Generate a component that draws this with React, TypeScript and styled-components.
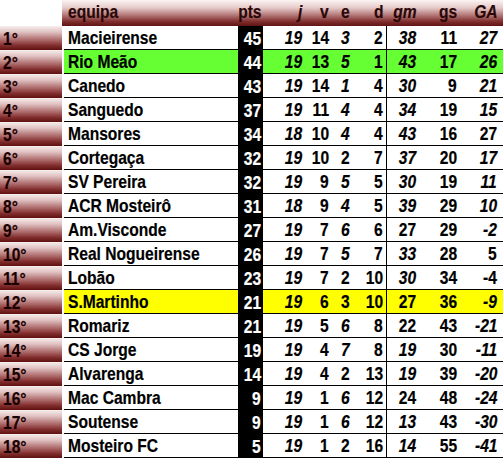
import styled, { createGlobalStyle, css } from "styled-components";

// a leading "_" marks a number printed in italics
const ROWS: [string, string, string, string[]][] = [
  ["1°", "Macieirense", "45", ["_19", "14", "_3", "2", "_38", "11", "_27"]],
  ["2°", "Rio Meão", "44", ["_19", "13", "_5", "1", "_43", "17", "_26"]],
  ["3°", "Canedo", "43", ["_19", "14", "_1", "4", "_30", "9", "_21"]],
  ["4°", "Sanguedo", "37", ["_19", "11", "_4", "4", "_34", "19", "_15"]],
  ["5°", "Mansores", "34", ["_18", "10", "_4", "4", "_43", "16", "27"]],
  ["6°", "Cortegaça", "32", ["_19", "10", "2", "7", "_37", "20", "_17"]],
  ["7°", "SV Pereira", "32", ["_19", "9", "_5", "5", "_30", "19", "_11"]],
  ["8°", "ACR Mosteirô", "31", ["_18", "9", "_4", "5", "_39", "29", "_10"]],
  ["9°", "Am.Visconde", "27", ["_19", "7", "_6", "6", "27", "29", "_-2"]],
  ["10°", "Real Nogueirense", "26", ["_19", "7", "_5", "7", "_33", "28", "5"]],
  ["11°", "Lobão", "23", ["_19", "7", "2", "10", "_30", "34", "-4"]],
  ["12°", "S.Martinho", "21", ["_19", "6", "3", "10", "27", "36", "_-9"]],
  ["13°", "Romariz", "21", ["_19", "5", "_6", "8", "22", "43", "_-21"]],
  ["14°", "CS Jorge", "19", ["_19", "4", "_7", "8", "_19", "30", "_-11"]],
  ["15°", "Alvarenga", "14", ["_19", "4", "2", "13", "_19", "39", "_-20"]],
  ["16°", "Mac Cambra", "9", ["_19", "1", "_6", "12", "24", "48", "_-24"]],
  ["17°", "Soutense", "9", ["_19", "1", "_6", "12", "_13", "43", "_-30"]],
  ["18°", "Mosteiro FC", "5", ["_19", "1", "2", "16", "_14", "55", "_-41"]],
];

const HIGHLIGHT: Record<number, string> = { 1: "#66ff33", 11: "#ffff00" };

// right padding of each number column
const PADS = [2, 2, 2, 3, 2, 2, 6];

function App() {
  return (
    <>
      <GlobalStyle />
      <Table>
        <HeadRow>
          <Blank />
          <HeadBar>
            <span />
            <HeadCell $align="left" $pad={4}>
              <Txt $origin="left">equipa</Txt>
            </HeadCell>
            <HeadCell $pad={2}>
              <Txt>pts</Txt>
            </HeadCell>
            {["j", "v", "e", "d", "gm", "gs", "GA"].map((h, i) => (
              <HeadCell key={h} $pad={PADS[i]}>
                <Txt $italic={h === "j" || h === "gm" || h === "GA"}>{h}</Txt>
              </HeadCell>
            ))}
          </HeadBar>
        </HeadRow>
        {ROWS.map(([pos, name, pts, nums], r) => (
          <Row key={pos}>
            <Pos>
              <Txt $origin="left">{pos}</Txt>
            </Pos>
            <span />
            <Name $bg={HIGHLIGHT[r]}>
              <Txt $origin="left">{name}</Txt>
            </Name>
            <Pts>
              <Txt>{pts}</Txt>
            </Pts>
            {nums.map((n, i) => (
              <Num key={i} $bg={HIGHLIGHT[r]} $pad={PADS[i]} $line={i === 3}>
                <Txt $italic={n.startsWith("_")}>{n.replace("_", "")}</Txt>
              </Num>
            ))}
          </Row>
        ))}
      </Table>
    </>
  );
}

export default App;

const GlobalStyle = createGlobalStyle`
  body {
    margin: 0;
    background: #ffffff;
    font-family: "Liberation Sans", Arial, sans-serif;
    font-weight: 700;
    font-size: 19px;
    color: #000;
  }
`;

const COLS = "62px 2px 174px 25px 41px 27px 21px 35px 31px 41px 44px";

const Table = styled.div`
  width: 503px;
  height: 458px;
  overflow: hidden;
`;

const HeadRow = styled.div`
  display: grid;
  grid-template-columns: 62px 1fr;
  height: 26px;
`;

const Blank = styled.div`
  background: #fff;
`;

const HeadBar = styled.div`
  display: grid;
  grid-template-columns: 2px 174px 25px 41px 27px 21px 35px 31px 41px 44px;
  background: linear-gradient(
    to bottom,
    #fbf3f3 0%,
    #e6caca 30%,
    #b47878 58%,
    #7d2a2a 84%,
    #611414 100%
  );
`;

const cellBase = css<{ $pad?: number; $align?: string }>`
  display: flex;
  align-items: center;
  justify-content: ${(p) => (p.$align === "left" ? "flex-start" : "flex-end")};
  padding-right: ${(p) => p.$pad ?? 0}px;
  padding-left: ${(p) => (p.$align === "left" ? 4 : 0)}px;
  white-space: nowrap;
  line-height: 1;
`;

const HeadCell = styled.div<{ $pad?: number; $align?: string }>`
  ${cellBase};
  padding-bottom: 3px;
  color: #2a0808;
`;

const Row = styled.div`
  display: grid;
  grid-template-columns: ${COLS};
  height: 24px;
`;

const Pos = styled.div`
  ${cellBase};
  justify-content: flex-start;
  padding-left: 3px;
  color: #1a0000;
  background: linear-gradient(
    to bottom,
    #f8eeee 0%,
    #e0c2c2 25%,
    #b27272 55%,
    #842f2f 80%,
    #5e1010 100%
  );
`;

const Name = styled.div<{ $bg?: string }>`
  ${cellBase};
  justify-content: flex-start;
  padding-left: 4px;
  background: ${(p) => p.$bg ?? "#fff"};
  border-bottom: 1px solid #000;
`;

const Pts = styled.div`
  ${cellBase};
  padding-right: 2px;
  background: #000;
  color: #fff;
`;

const Num = styled.div<{ $bg?: string; $pad: number; $line?: boolean }>`
  ${cellBase};
  background: ${(p) => p.$bg ?? "#fff"};
  border-bottom: 1px solid #000;
  border-right: ${(p) => (p.$line ? "1px solid #000" : "none")};
`;

const Txt = styled.span<{ $italic?: boolean; $origin?: string }>`
  display: inline-block;
  font-style: ${(p) => (p.$italic ? "italic" : "normal")};
  transform: scaleX(0.82);
  transform-origin: ${(p) => p.$origin ?? "right"} center;
  -webkit-text-stroke: 0.2px currentColor;
`;
